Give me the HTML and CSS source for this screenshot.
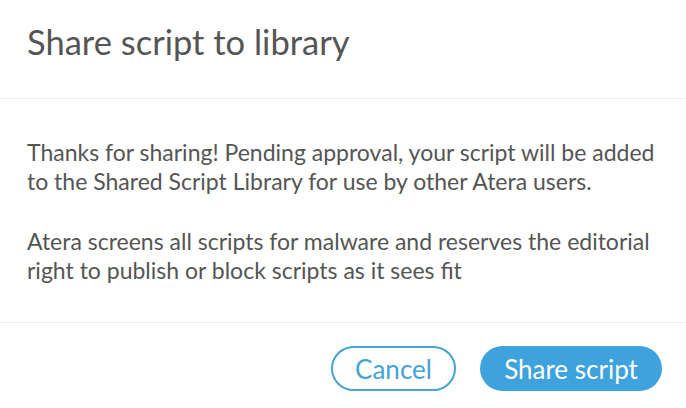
FILE: index.html
```html
<!DOCTYPE html>
<html>
<head>
<meta charset="utf-8">
<link rel="stylesheet" href="styles.css">
</head>
<body>
<div class="modal">
  <div class="header"><h1 class="title">Share script to library</h1></div>
  <div class="body">
    <p class="para">Thanks for sharing! Pending approval, your script will be added to the Shared Script Library for use by other Atera users.</p>
    <p class="para">Atera screens all scripts for malware and reserves the editorial right to publish or block scripts as it sees fit</p>
  </div>
  <div class="footer">
    <button class="btn btn-outline">Cancel</button>
    <button class="btn btn-primary">Share script</button>
  </div>
</div>
</body>
</html>
```
FILE: styles.css
```css
html, body { margin: 0; padding: 0; background: #fff; }
body { font-family: "Lato", "Open Sans", sans-serif; color: #555; }
.modal { width: 686px; height: 408px; }
.header { height: 99px; border-bottom: 1px solid #eeeeee; box-sizing: border-box; padding: 20px 27px 0; }
.title { margin: 0; font-weight: 400; font-size: 34.5px; line-height: 44px; color: #555; }
.body { height: 224px; border-bottom: 1px solid #eeeeee; box-sizing: border-box; padding: 39px 0 0 27px; }
.para { margin: 0 0 31px; width: 640px; font-size: 23px; line-height: 29px; }
.footer { display: flex; justify-content: flex-end; gap: 24px; padding: 23px 24px 0 0; }
.btn { height: 45px; border-radius: 23px; font-family: inherit; font-size: 26px; padding: 0; box-sizing: border-box; cursor: pointer; }
.btn-outline { background: #fff; border: 2px solid #45a3d6; color: #45a3d6; width: 125px; }
.btn-primary { background: #3ea2dc; border: none; color: #fff; width: 182px; }
```
